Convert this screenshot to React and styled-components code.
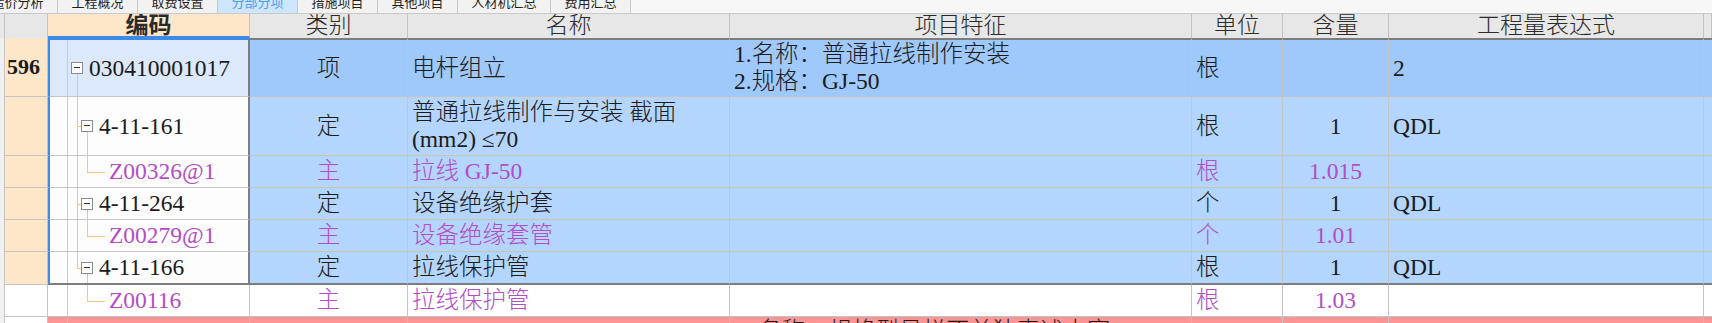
import React from "react";
import styled, { createGlobalStyle, css } from "styled-components";

const COLS = "5px 43px 202px 158px 322px 462px 91px 106px 315px 8px";

const ITEM_BG = "#9fc8fb";
const SUB_BG = "#b4d6fe";
const CODE_ITEM_BG = "#dce9fc";
const CODE_SUB_BG = "#fdfdfd";
const PEACH = "#fee6c9";
const RED = "#ff9494";
const PURPLE = "#b24dc6";
const INK = "#1b1b1b";
const GRID = "#c4c4c4";
const HEAVY = "#7d7d7d";
const SELECT = "#3d8be6";
const TREE = "#f8c27f";

const GlobalStyle = createGlobalStyle`
  *, *::before, *::after { box-sizing: border-box; }
  html, body { margin: 0; padding: 0; background: #ffffff; }
  #root { width: 1712px; height: 323px; overflow: hidden; }
`;

const Page = styled.div`
  width: 1712px;
  height: 323px;
  overflow: hidden;
  background: #ffffff;
  font-family: "Liberation Serif", "Noto Sans CJK SC", serif;
  color: ${INK};
`;

/* ---------- tab strip (mostly scrolled out of view) ---------- */

const TabBar = styled.div`
  display: flex;
  height: 14px;
  background: #f7f7f7;
  border-bottom: 1px solid #c9c9c9;
  overflow: hidden;
`;

const Tab = styled.div`
  flex: 0 0 ${(p) => p.$w}px;
  margin-left: ${(p) => p.$shift || 0}px;
  display: flex;
  align-items: flex-end;
  justify-content: center;
  border-right: 1px solid #c9c9c9;
  background: ${(p) => (p.$active ? "#cde6fb" : "#f2f2f2")};
  color: ${(p) => (p.$active ? "#4f9be6" : "#1f1f1f")};
  font-family: "Noto Sans CJK SC", sans-serif;
  font-size: 13px;
  line-height: 16px;
  white-space: nowrap;

  span {
    margin-bottom: 3px;
  }
`;

/* ---------- grid ---------- */

const HeadRow = styled.div`
  display: grid;
  grid-template-columns: ${COLS};
  height: 24px;
`;

const HeadCell = styled.div`
  background: ${(p) => (p.$accent ? PEACH : "#e7e7e7")};
  border-right: 1px solid ${GRID};
  border-bottom: ${(p) => (p.$accent ? `2px solid ${SELECT}` : "none")};
  font-size: 23px;
  font-weight: ${(p) => (p.$accent ? 700 : 300)};
  line-height: 23px;
  text-align: center;
  color: #2a2a2a;
  white-space: nowrap;
  overflow: hidden;
`;

const Row = styled.div`
  display: grid;
  grid-template-columns: ${COLS};
  height: ${(p) => p.$h}px;
`;

const Cell = styled.div`
  display: flex;
  align-items: ${(p) => (p.$hang ? "flex-start" : "center")};
  justify-content: ${(p) => (p.$center ? "center" : "flex-start")};
  padding: ${(p) => (p.$hang ? "1px 4px 0 28px" : "0 4px")};
  background: ${(p) => p.$bg};
  color: ${(p) => p.$ink || INK};
  border-right: 1px solid ${GRID};
  border-bottom: 1px solid ${GRID};
  font-size: 23.5px;
  font-weight: 300;
  line-height: 27px;
  white-space: ${(p) => (p.$wrap ? "normal" : "nowrap")};
  overflow: hidden;
  ${(p) =>
    p.$top &&
    css`
      border-top: 2px solid ${HEAVY};
    `}
  ${(p) =>
    p.$bottom &&
    css`
      border-bottom: 2px solid ${HEAVY};
    `}
`;

const Strip = styled.div`
  background: #f0f0f0;
  border-right: 1px solid ${GRID};
`;

const RowNum = styled.div`
  display: flex;
  align-items: center;
  padding-left: 2px;
  background: ${(p) => (p.$marked ? PEACH : "#ffffff")};
  border-right: 1px solid ${GRID};
  border-bottom: 1px solid ${GRID};
  font-size: 22px;
  font-weight: 700;
  color: #1a1a1a;
`;

const CodeCell = styled(Cell)`
  position: relative;
  padding: 0 0 0 ${(p) => p.$indent}px;
  ${(p) =>
    p.$sel &&
    css`
      border-left: 2px solid ${SELECT};
      border-right: 2px solid ${HEAVY};
    `}
  ${(p) =>
    p.$focus &&
    css`
      border-top: 2px solid ${SELECT};
    `}
`;

const Lines = styled.div`
  display: flex;
  flex-direction: column;
  white-space: nowrap;
`;

const Toggle = styled.span`
  position: relative;
  flex: 0 0 12px;
  width: 12px;
  height: 12px;
  margin-right: 6px;
  background: #ffffff;
  border: 1px solid #8a8a8a;

  &::after {
    content: "";
    position: absolute;
    left: 2px;
    top: 4px;
    width: 6px;
    height: 1px;
    background: #2b2b2b;
  }
`;

const VLine = styled.i`
  position: absolute;
  left: ${(p) => p.$x}px;
  top: ${(p) => p.$from};
  bottom: ${(p) => p.$to};
  width: 1px;
  background: ${TREE};
`;

const HLine = styled.i`
  position: absolute;
  left: ${(p) => p.$x}px;
  top: 50%;
  width: ${(p) => p.$w}px;
  height: 1px;
  background: ${TREE};
`;

const TABS = [
  { label: "造价分析", w: 80, shift: -22 },
  { label: "工程概况", w: 80 },
  { label: "取费设置", w: 80 },
  { label: "分部分项", w: 80, active: true },
  { label: "措施项目", w: 80 },
  { label: "其他项目", w: 80 },
  { label: "人材机汇总", w: 93 },
  { label: "费用汇总", w: 80 },
];

const HEAD = ["", "", "编码", "类别", "名称", "项目特征", "单位", "含量", "工程量表达式", ""];

const ROWS = [
  { h: 59, level: 0, num: "596", code: "030410001017", type: "项", name: "电杆组立", feat: ["1.名称：普通拉线制作安装", "2.规格：GJ-50"], unit: "根", qty: "", expr: "2" },
  { h: 59, level: 1, code: "4-11-161", type: "定", name: "普通拉线制作与安装 截面 (mm2) ≤70", unit: "根", qty: "1", expr: "QDL" },
  { h: 32, level: 2, code: "Z00326@1", type: "主", name: "拉线 GJ-50", unit: "根", qty: "1.015", expr: "" },
  { h: 32, level: 1, code: "4-11-264", type: "定", name: "设备绝缘护套", unit: "个", qty: "1", expr: "QDL" },
  { h: 32, level: 2, code: "Z00279@1", type: "主", name: "设备绝缘套管", unit: "个", qty: "1.01", expr: "" },
  { h: 33, level: 1, code: "4-11-166", type: "定", name: "拉线保护管", unit: "根", qty: "1", expr: "QDL", lastChild: true },
  { h: 32, level: 2, code: "Z00116", type: "主", name: "拉线保护管", unit: "根", qty: "1.03", expr: "", underLast: true, outside: true },
];

// page x of the tree rails
const RAIL0 = 67;
const RAIL1 = 77;
const RAIL2 = 87;

const TreeLines = ({ row, origin }) => {
  const x = (px) => px - origin;
  const below = "calc(50% + 6px)";
  const lines = [<VLine key="r0" $x={x(RAIL0)} $from="0" $to="0" />];

  if (!row) return lines;

  if (row.level === 0) {
    lines.push(<VLine key="r1" $x={x(RAIL1)} $from={below} $to="0" />);
  }
  if (row.level === 1) {
    lines.push(<VLine key="r1" $x={x(RAIL1)} $from="0" $to={row.lastChild ? "50%" : "0"} />);
    lines.push(<HLine key="h1" $x={x(RAIL1)} $w={4} />);
    lines.push(<VLine key="r2" $x={x(RAIL2)} $from={below} $to="0" />);
  }
  if (row.level === 2) {
    if (!row.underLast) lines.push(<VLine key="r1" $x={x(RAIL1)} $from="0" $to="0" />);
    lines.push(<VLine key="r2" $x={x(RAIL2)} $from="0" $to="50%" />);
    lines.push(<HLine key="h2" $x={x(RAIL2)} $w={18} />);
  }
  return lines;
};

const START = [71, 81, 109];

const DataRow = ({ row, first, last }) => {
  const sel = !row.outside;
  const origin = 48 + (sel ? 2 : 0);
  const bg = row.outside ? "#ffffff" : row.level === 0 ? ITEM_BG : SUB_BG;
  const codeBg = row.outside ? "#ffffff" : row.level === 0 ? CODE_ITEM_BG : CODE_SUB_BG;
  const ink = row.level === 2 ? PURPLE : INK;

  return (
    <Row $h={row.h}>
      <Strip />
      <RowNum $marked={sel}>{row.num}</RowNum>
      <CodeCell
        $bg={codeBg}
        $ink={ink}
        $indent={START[row.level] - origin}
        $sel={sel}
        $focus={first}
        $top={first}
        $bottom={last}
      >
        <TreeLines row={row} origin={origin} />
        {row.level < 2 && <Toggle />}
        {row.code}
      </CodeCell>
      <Cell $bg={bg} $ink={ink} $center $top={first} $bottom={last}>
        {row.type}
      </Cell>
      <Cell $bg={bg} $ink={ink} $wrap $top={first} $bottom={last}>
        {row.name}
      </Cell>
      <Cell $bg={bg} $top={first} $bottom={last}>
        {row.feat && (
          <Lines>
            {row.feat.map((t) => (
              <div key={t}>{t}</div>
            ))}
          </Lines>
        )}
      </Cell>
      <Cell $bg={bg} $ink={ink} $top={first} $bottom={last}>
        {row.unit}
      </Cell>
      <Cell $bg={bg} $ink={ink} $center $top={first} $bottom={last}>
        {row.qty}
      </Cell>
      <Cell $bg={bg} $top={first} $bottom={last}>
        {row.expr}
      </Cell>
      <Cell $bg={bg} $top={first} $bottom={last} />
    </Row>
  );
};

const WarnRow = () => (
  <Row $h={40}>
    <Strip />
    <RowNum />
    <CodeCell $bg={RED} $indent={0}>
      <TreeLines origin={48} />
    </CodeCell>
    <Cell $bg={RED} />
    <Cell $bg={RED} />
    <Cell $bg={RED} $hang>
      名称、规格型号栏不单独表述内容
    </Cell>
    <Cell $bg={RED} />
    <Cell $bg={RED} />
    <Cell $bg={RED} />
    <Cell $bg={RED} />
  </Row>
);

export default function App() {
  return (
    <Page>
      <GlobalStyle />
      <TabBar>
        {TABS.map((t) => (
          <Tab key={t.label} $w={t.w} $shift={t.shift} $active={t.active}>
            <span>{t.label}</span>
          </Tab>
        ))}
      </TabBar>

      <HeadRow>
        {HEAD.map((h, i) => (
          <HeadCell key={i} $accent={i === 2}>
            {h}
          </HeadCell>
        ))}
      </HeadRow>

      {ROWS.map((row, i) => (
        <DataRow key={row.code} row={row} first={i === 0} last={i === 5} />
      ))}

      <WarnRow />
    </Page>
  );
}
